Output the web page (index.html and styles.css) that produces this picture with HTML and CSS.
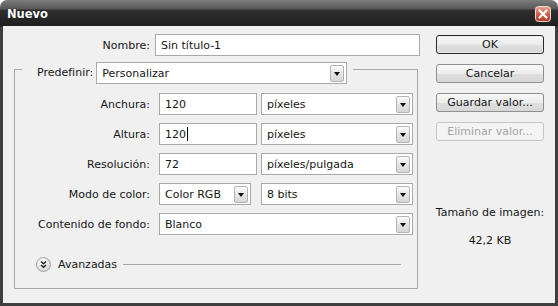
FILE: index.html
```html
<!DOCTYPE html>
<html lang="es">
<head>
  <meta charset="UTF-8" />
  <title>Nuevo</title>
  <link rel="stylesheet" href="styles.css">
</head>
<body>
  <div class="window">
    <div class="titlebar">
      <span class="title">Nuevo</span>
      <svg class="close" width="16" height="16" viewBox="0 0 16 16">
        <defs>
          <linearGradient id="red" x1="0" y1="0" x2="0" y2="1">
            <stop offset="0" stop-color="#e9a593"/>
            <stop offset="0.5" stop-color="#d0604a"/>
            <stop offset="1" stop-color="#b93a26"/>
          </linearGradient>
        </defs>
        <rect x="0.5" y="0.5" width="15" height="15" rx="3" fill="url(#red)" stroke="#f3d9d2"/>
        <path d="M4.5 4.5 L11.5 11.5 M11.5 4.5 L4.5 11.5" stroke="#fff" stroke-width="2.2" stroke-linecap="round"/>
      </svg>
    </div>

    <div class="content">
      <div class="main">
        <div class="name-row">
          <label>Nombre:</label>
          <div class="field name">Sin título-1</div>
        </div>

        <fieldset class="group">
          <legend>
            <label>Predefinir:</label>
            <div class="field select preset"><span class="value">Personalizar</span><span class="arrow"></span></div>
          </legend>

          <div class="grid">
            <label>Anchura:</label>
            <div class="field">120</div>
            <div class="field select"><span class="value">píxeles</span><span class="arrow"></span></div>

            <label>Altura:</label>
            <div class="field">120<span class="caret"></span></div>
            <div class="field select"><span class="value">píxeles</span><span class="arrow"></span></div>

            <label>Resolución:</label>
            <div class="field">72</div>
            <div class="field select"><span class="value">píxeles/pulgada</span><span class="arrow"></span></div>

            <label>Modo de color:</label>
            <div class="field select mode"><span class="value">Color RGB</span><span class="arrow"></span></div>
            <div class="field select"><span class="value">8 bits</span><span class="arrow"></span></div>

            <label>Contenido de fondo:</label>
            <div class="field select span2"><span class="value">Blanco</span><span class="arrow"></span></div>
          </div>

          <div class="advanced">
            <svg class="expand" width="15" height="15" viewBox="0 0 15 15">
              <defs>
                <radialGradient id="knob" cx="0.4" cy="0.35" r="0.7">
                  <stop offset="0" stop-color="#ffffff"/>
                  <stop offset="1" stop-color="#d2d2d2"/>
                </radialGradient>
              </defs>
              <circle cx="7.5" cy="7.5" r="7" fill="url(#knob)" stroke="#a3a3a3"/>
              <path d="M5 4.5 L7.5 6.8 L10 4.5 M5 8 L7.5 10.3 L10 8" fill="none" stroke="#1c1c1c" stroke-width="1.4"/>
            </svg>
            <span>Avanzadas</span>
            <span class="rule"></span>
          </div>
        </fieldset>
      </div>

      <div class="side">
        <div class="btn default">OK</div>
        <div class="btn">Cancelar</div>
        <div class="btn">Guardar valor...</div>
        <div class="btn disabled">Eliminar valor...</div>
        <div class="info">
          <div>Tamaño de imagen:</div>
          <div class="size">42,2 KB</div>
        </div>
      </div>
    </div>
  </div>
</body>
</html>
```

FILE: styles.css
```css
body {
  margin: 0;
  font-family: "DejaVu Sans", sans-serif;
  font-size: 11px;
  color: #161616;
}

.window {
  width: 558px;
  height: 306px;
  box-sizing: border-box;
  padding: 0 3px 3px;
  display: flex;
  flex-direction: column;
  border-radius: 7px 7px 0 0;
  background: linear-gradient(to bottom, #7c7c7c 0, #575757 9px, #2f2f2f 10px, #1f1f1f 26px, #3e3e3e 27px, #3e3e3e 100%);
}

.titlebar {
  height: 26px;
  margin: 0 -3px;
  padding: 2px 7px 0;
  box-sizing: border-box;
  display: flex;
  align-items: center;
  justify-content: space-between;
}

.title {
  color: #fff;
  font-weight: bold;
  font-size: 11.5px;
  text-shadow: 0 0 2px rgba(0, 0, 0, 0.7);
}

.close {
  display: block;
}

.content {
  flex: 1;
  display: flex;
  background: #f0f0f0;
  padding: 8px 0 0 11px;
}

.main {
  width: 404px;
  flex-shrink: 0;
}

.name-row {
  display: flex;
  align-items: center;
}

.name-row label {
  width: 141px;
  flex-shrink: 0;
  padding-right: 5px;
  box-sizing: border-box;
  text-align: right;
}

/* inputs and dropdowns */
.field {
  height: 22px;
  box-sizing: border-box;
  border: 1px solid #a9a9a9;
  background: #fff;
  display: flex;
  align-items: center;
  padding-left: 5px;
  white-space: nowrap;
}

.field.name {
  width: 265px;
  flex-shrink: 0;
}

.select {
  padding-right: 2px;
}

.select .value {
  flex: 1;
}

.arrow {
  width: 14px;
  height: 17px;
  box-sizing: border-box;
  border: 1px solid #b4b4b4;
  border-radius: 2px;
  background: linear-gradient(to bottom, #fbfbfb, #e6e6e6 50%, #d6d6d6);
  display: flex;
  align-items: center;
  justify-content: center;
}

.arrow::after {
  content: "";
  border-left: 3px solid transparent;
  border-right: 3px solid transparent;
  border-top: 4px solid #111;
  margin-top: 1px;
}

.caret {
  display: inline-block;
  width: 1px;
  height: 14px;
  background: #000;
  margin-left: 1px;
}

/* group box */
.group {
  margin: 6px 0 0;
  padding: 17px 0 16px;
  border: 1px solid #a7a7a7;
  width: 404px;
  box-sizing: border-box;
}

.group legend {
  margin-left: 7px;
  padding: 0 6px 0 15px;
  height: 14px;
  display: flex;
  align-items: flex-start;
}

.group legend label {
  margin-right: 3px;
  line-height: 22px;
}

.preset {
  width: 251px;
}

.grid {
  display: grid;
  grid-template-columns: 140px 98px 152px;
  column-gap: 4px;
  row-gap: 8px;
  align-items: center;
}

.grid label {
  text-align: right;
  padding-right: 5px;
}

.mode {
  width: 92px;
}

.span2 {
  grid-column: 2 / 4;
}

.advanced {
  display: flex;
  align-items: center;
  height: 16px;
  margin: 21px 16px 0 21px;
}

.expand {
  display: block;
  margin-right: 7px;
}

.rule {
  flex: 1;
  height: 1px;
  background: #a7a7a7;
  margin-left: 6px;
}

/* buttons column */
.side {
  width: 108px;
  margin-left: 18px;
  padding-top: 1px;
  display: flex;
  flex-direction: column;
}

.btn {
  height: 19px;
  box-sizing: border-box;
  margin-bottom: 10px;
  border: 1px solid #8f8f8f;
  border-radius: 3px;
  background: linear-gradient(to bottom, #f8f8f8, #ececec 50%, #dfdfdf 51%, #d7d7d7);
  display: flex;
  align-items: center;
  justify-content: center;
  white-space: nowrap;
}

.btn.default {
  border-color: #2a2a2a;
  box-shadow: inset 0 0 0 1px #e9e9e9;
}

.btn.disabled {
  color: #a4a4a4;
  border-color: #c6c6c6;
  background: #f4f4f4;
}

.info {
  margin-top: 55px;
  text-align: center;
  line-height: 14px;
  white-space: nowrap;
  display: flex;
  flex-direction: column;
  align-items: center;
}

.size {
  margin-top: 14px;
}
```
